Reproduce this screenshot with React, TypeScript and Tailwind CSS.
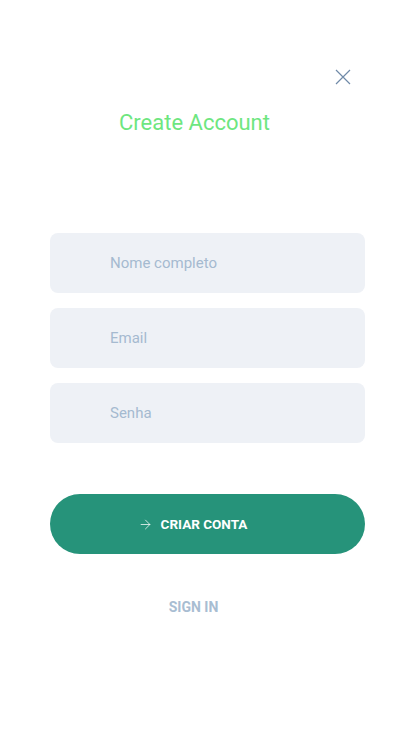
import React from 'react';
import { ArrowRight } from 'lucide-react';

const App = () => {
    const fields = ['Nome completo', 'Email', 'Senha'];

    return (
        <div className="min-h-[736px] w-[414px] bg-white pl-[50px] pr-[49px] font-['Roboto',sans-serif]">
            {/* Close */}
            <div className="flex justify-end pt-[68px] pr-[13px]">
                <svg width="18" height="18" viewBox="0 0 18 18" className="text-[#6f8aa8]">
                    <path d="M2 2 L16 16 M16 2 L2 16" stroke="currentColor" strokeWidth="1.2" fill="none" />
                </svg>
            </div>

            {/* Title */}
            <div className="flex justify-center pr-[26px] pt-[22px]">
                <h1 className="text-[22px] leading-[30px] font-normal text-[#6ee67f]">Create Account</h1>
            </div>

            {/* Fields */}
            <div className="mt-[95px] flex flex-col gap-[15px]">
                {fields.map((f) => (
                    <input
                        key={f}
                        type={f === 'Senha' ? 'password' : 'text'}
                        placeholder={f}
                        className="h-[60px] w-full rounded-lg bg-[#eef1f6] pl-[60px] text-[15px] text-[#7d93ab] placeholder:text-[#a5bad0] outline-none"
                    />
                ))}
            </div>

            {/* Submit */}
            <button className="mt-[51px] flex h-[60px] w-full items-center justify-center gap-[8px] rounded-full bg-[#26937a] pr-[30px] text-[13.5px] font-bold text-white">
                <ArrowRight className="h-[15px] w-[15px]" strokeWidth={1.2} />
                <span>CRIAR CONTA</span>
            </button>

            <div className="mt-[43px] flex justify-center pr-[28px]">
                <button className="text-[14px] font-bold text-[#a8bdd2]">SIGN IN</button>
            </div>
        </div>
    );
};

export default App;
